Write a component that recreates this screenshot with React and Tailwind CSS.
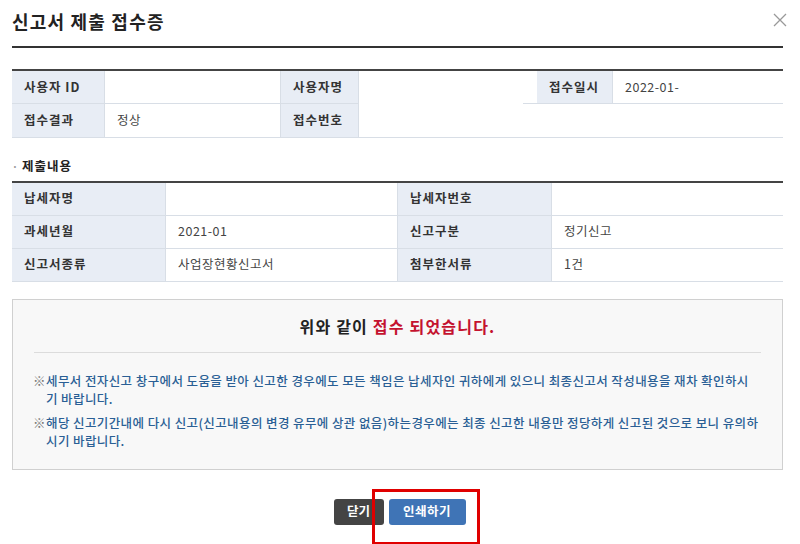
const FONT = { fontFamily: '"Noto Sans CJK KR", "Noto Sans", sans-serif' };

function Label({ children, className = "" }) {
  return (
    <div
      className={`flex items-center px-[12px] bg-[#e8edf5] border-b border-[#d8dee6] text-[12.5px] font-bold text-[#333] tracking-[1px] ${className}`}
    >
      {children}
    </div>
  );
}

function Value({ children, className = "" }) {
  return (
    <div className={`flex items-center px-[12px] border-b border-[#d8dee6] text-[12.5px] text-[#444] tracking-[0.5px] ${className}`}>
      {children}
    </div>
  );
}

function Note({ lines }) {
  return (
    <div className="flex text-[12.5px] leading-[18px] text-[#2a5f95] font-medium tracking-[0.4px] whitespace-nowrap">
      <span className="w-[13px] shrink-0 text-[#777] tracking-normal">※</span>
      <div>
        {lines.map((l, i) => (
          <div key={i}>{l}</div>
        ))}
      </div>
    </div>
  );
}

export default function App() {
  return (
    <div className="relative w-[800px] h-[544px] overflow-hidden bg-white pl-[12px] pr-[17px]" style={FONT}>
      <header className="h-[48px] flex items-center justify-between border-b-2 border-[#333]">
        <h1 className="text-[18px] font-bold text-[#222] tracking-[1.2px] -mt-[3px]">신고서 제출 접수증</h1>
        <svg width="14" height="14" viewBox="0 0 14 14" className="-mt-[6px] -mr-[4px]">
          <path d="M1 1L13 13M13 1L1 13" stroke="#999" strokeWidth="1.3" fill="none" />
        </svg>
      </header>

      {/* 접수 정보 */}
      <section className="mt-[21px] border-t-2 border-[#444]">
        <div className="flex h-[33px]">
          <Label className="w-[93px] border-r">사용자 ID</Label>
          <Value className="w-[176px] border-r">{""}</Value>
          <Label className="w-[78px] border-r">사용자명</Label>
          <div className="w-[164px]" />
          <div className="w-[14px] border-b border-[#d8dee6]" />
          <Label className="w-[76px] border-r">접수일시</Label>
          <Value className="flex-1">2022-01-</Value>
        </div>
        <div className="flex h-[34px]">
          <Label className="w-[93px] border-r">접수결과</Label>
          <Value className="w-[176px] border-r">정상</Value>
          <Label className="w-[78px] border-r">접수번호</Label>
          <Value className="flex-1">{""}</Value>
        </div>
      </section>

      <div className="mt-[19px] text-[12.5px] font-bold text-[#222] tracking-[1px] flex items-center gap-[3px]">
        <span className="text-[#999] text-[10px]">·</span>제출내용
      </div>

      {/* 제출 내용 */}
      <section className="mt-[5px] border-t-2 border-[#444]">
        {[
          ["납세자명", "", "납세자번호", ""],
          ["과세년월", "2021-01", "신고구분", "정기신고"],
          ["신고서종류", "사업장현황신고서", "첨부한서류", "1건"],
        ].map(([a, b, c, d]) => (
          <div key={a} className="flex h-[33px]">
            <Label className="w-[154px] border-r">{a}</Label>
            <Value className="w-[232px] border-r">{b}</Value>
            <Label className="w-[154px] border-r">{c}</Label>
            <Value className="flex-1">{d}</Value>
          </div>
        ))}
      </section>

      {/* 안내 */}
      <section className="mt-[17px] h-[171px] border border-[#d0d0d0] bg-[#f8f8f8] px-[20px] overflow-hidden">
        <div className="h-[53px] flex items-center justify-center border-b border-[#dcdcdc] mx-[1px] text-[16px] font-bold tracking-[1.2px]">
          <span className="text-[#222]">위와 같이&nbsp;</span>
          <span className="text-[#c4122f]">접수 되었습니다.</span>
        </div>
        <div className="pt-[19px] flex flex-col gap-[6px]">
          <Note
            lines={[
              "세무서 전자신고 창구에서 도움을 받아 신고한 경우에도 모든 책임은 납세자인 귀하에게 있으니 최종신고서 작성내용을 재차 확인하시",
              "기 바랍니다.",
            ]}
          />
          <Note
            lines={[
              "해당 신고기간내에 다시 신고(신고내용의 변경 유무에 상관 없음)하는경우에는 최종 신고한 내용만 정당하게 신고된 것으로 보니 유의하",
              "시기 바랍니다.",
            ]}
          />
        </div>
      </section>

      <div className="mt-[29px] flex justify-center gap-[5px] pl-[4px]">
        <button className="h-[26px] w-[50px] rounded-[3px] bg-[#444] text-white text-[12.5px] font-bold">닫기</button>
        <button className="h-[26px] w-[77px] rounded-[3px] bg-[#3f74b6] text-white text-[12.5px] font-bold tracking-[0.5px]">인쇄하기</button>
      </div>

      {/* 강조 표시 */}
      <div className="absolute left-[372px] top-[489px] w-[108px] h-[56px] border-[3px] border-[#e00000]" />
    </div>
  );
}
